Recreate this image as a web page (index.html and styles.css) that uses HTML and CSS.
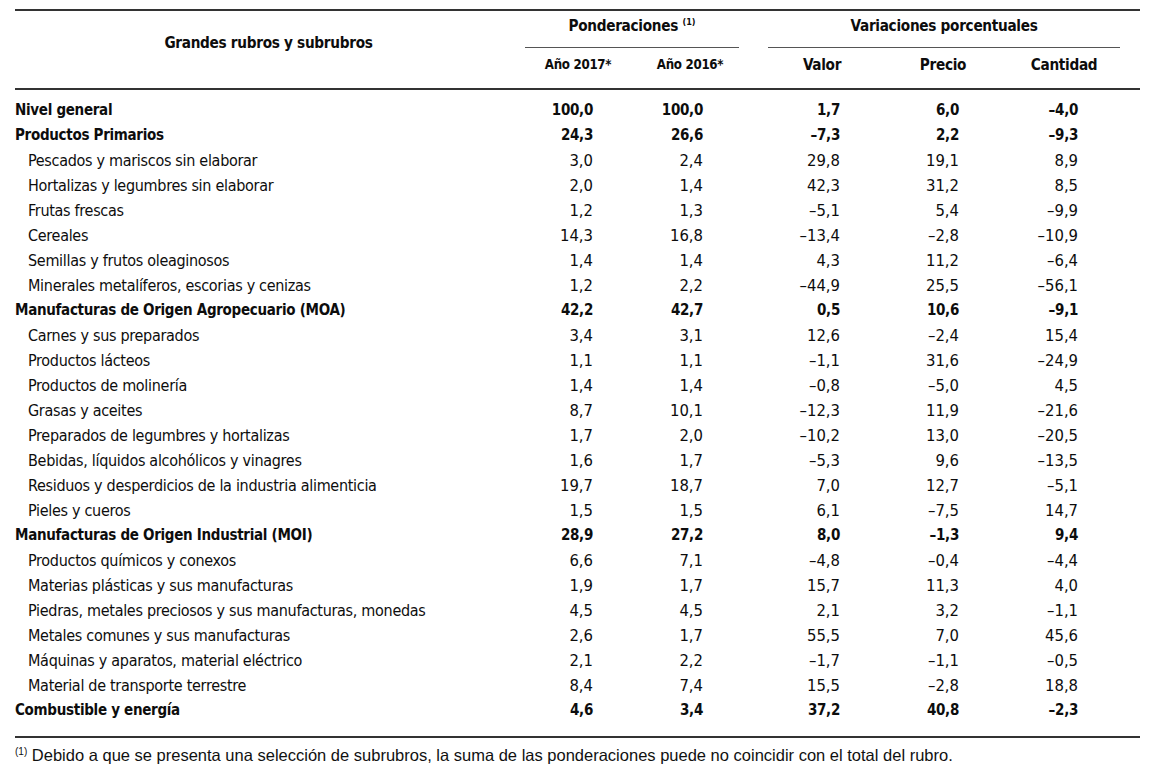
FILE: index.html
```html
<!DOCTYPE html>
<html lang="es">
<head>
<meta charset="utf-8">
<title>Ponderaciones y variaciones porcentuales</title>
<link rel="stylesheet" href="styles.css">
</head>
<body>
<div class="page">
<table class="tbl">
<colgroup>
<col class="c-label"><col class="c-a"><col class="c-b"><col class="c-v"><col class="c-p"><col class="c-q">
</colgroup>
<thead>
<tr class="h1">
<th rowspan="2" class="h-label">Grandes rubros y subrubros</th>
<th colspan="2" class="grp"><span class="grp-in grp-pond">Ponderaciones <sup>(1)</sup></span></th>
<th colspan="3" class="grp"><span class="grp-in grp-var">Variaciones porcentuales</span></th>
</tr>
<tr class="h2">
<th class="ha">Año 2017*</th><th class="hb">Año 2016*</th><th class="hv">Valor</th><th class="hp">Precio</th><th class="hq">Cantidad</th>
</tr>
</thead>
<tbody>
<tr class="main"><td>Nivel general</td><td>100,0</td><td>100,0</td><td>1,7</td><td>6,0</td><td>–4,0</td></tr>
<tr class="main"><td>Productos Primarios</td><td>24,3</td><td>26,6</td><td>–7,3</td><td>2,2</td><td>–9,3</td></tr>
<tr><td>Pescados y mariscos sin elaborar</td><td>3,0</td><td>2,4</td><td>29,8</td><td>19,1</td><td>8,9</td></tr>
<tr><td>Hortalizas y legumbres sin elaborar</td><td>2,0</td><td>1,4</td><td>42,3</td><td>31,2</td><td>8,5</td></tr>
<tr><td>Frutas frescas</td><td>1,2</td><td>1,3</td><td>–5,1</td><td>5,4</td><td>–9,9</td></tr>
<tr><td>Cereales</td><td>14,3</td><td>16,8</td><td>–13,4</td><td>–2,8</td><td>–10,9</td></tr>
<tr><td>Semillas y frutos oleaginosos</td><td>1,4</td><td>1,4</td><td>4,3</td><td>11,2</td><td>–6,4</td></tr>
<tr><td>Minerales metalíferos, escorias y cenizas</td><td>1,2</td><td>2,2</td><td>–44,9</td><td>25,5</td><td>–56,1</td></tr>
<tr class="main"><td>Manufacturas de Origen Agropecuario (MOA)</td><td>42,2</td><td>42,7</td><td>0,5</td><td>10,6</td><td>–9,1</td></tr>
<tr><td>Carnes y sus preparados</td><td>3,4</td><td>3,1</td><td>12,6</td><td>–2,4</td><td>15,4</td></tr>
<tr><td>Productos lácteos</td><td>1,1</td><td>1,1</td><td>–1,1</td><td>31,6</td><td>–24,9</td></tr>
<tr><td>Productos de molinería</td><td>1,4</td><td>1,4</td><td>–0,8</td><td>–5,0</td><td>4,5</td></tr>
<tr><td>Grasas y aceites</td><td>8,7</td><td>10,1</td><td>–12,3</td><td>11,9</td><td>–21,6</td></tr>
<tr><td>Preparados de legumbres y hortalizas</td><td>1,7</td><td>2,0</td><td>–10,2</td><td>13,0</td><td>–20,5</td></tr>
<tr><td>Bebidas, líquidos alcohólicos y vinagres</td><td>1,6</td><td>1,7</td><td>–5,3</td><td>9,6</td><td>–13,5</td></tr>
<tr><td>Residuos y desperdicios de la industria alimenticia</td><td>19,7</td><td>18,7</td><td>7,0</td><td>12,7</td><td>–5,1</td></tr>
<tr><td>Pieles y cueros</td><td>1,5</td><td>1,5</td><td>6,1</td><td>–7,5</td><td>14,7</td></tr>
<tr class="main"><td>Manufacturas de Origen Industrial (MOI)</td><td>28,9</td><td>27,2</td><td>8,0</td><td>–1,3</td><td>9,4</td></tr>
<tr><td>Productos químicos y conexos</td><td>6,6</td><td>7,1</td><td>–4,8</td><td>–0,4</td><td>–4,4</td></tr>
<tr><td>Materias plásticas y sus manufacturas</td><td>1,9</td><td>1,7</td><td>15,7</td><td>11,3</td><td>4,0</td></tr>
<tr><td>Piedras, metales preciosos y sus manufacturas, monedas</td><td>4,5</td><td>4,5</td><td>2,1</td><td>3,2</td><td>–1,1</td></tr>
<tr><td>Metales comunes y sus manufacturas</td><td>2,6</td><td>1,7</td><td>55,5</td><td>7,0</td><td>45,6</td></tr>
<tr><td>Máquinas y aparatos, material eléctrico</td><td>2,1</td><td>2,2</td><td>–1,7</td><td>–1,1</td><td>–0,5</td></tr>
<tr><td>Material de transporte terrestre</td><td>8,4</td><td>7,4</td><td>15,5</td><td>–2,8</td><td>18,8</td></tr>
<tr class="main"><td>Combustible y energía</td><td>4,6</td><td>3,4</td><td>37,2</td><td>40,8</td><td>–2,3</td></tr>
</tbody>
</table>
<p class="note"><sup>(1)</sup> Debido a que se presenta una selección de subrubros, la suma de las ponderaciones puede no coincidir con el total del rubro.</p>
</div>
</body>
</html>
```
FILE: styles.css
```css
html, body {
  margin: 0;
  padding: 0;
  background: #ffffff;
}
.page {
  padding: 9px 16px 0 15px;
  color: #0d0d0d;
  font-family: "DejaVu Sans Condensed", "Liberation Sans Narrow", "Arial Narrow", sans-serif;
}
.tbl {
  width: 1125px;
  border-collapse: collapse;
  table-layout: fixed;
  font-size: 16.5px;
}
.c-label { width: 507px; }
.c-a { width: 112px; }
.c-b { width: 128px; }
.c-v { width: 120px; }
.c-p { width: 122px; }
.c-q { width: 136px; }

.tbl thead {
  border-top: 2px solid #333333;
  border-bottom: 2px solid #333333;
}
.tbl th {
  font-weight: bold;
  font-size: 15.2px;
  letter-spacing: -0.3px;
  line-height: 20px;
  padding: 0;
  text-align: center;
  vertical-align: top;
}
.h-label {
  padding-top: 22px !important;
}
.h1 .grp {
  padding-top: 5px;
}
.grp-in {
  display: block;
  padding-bottom: 11px;
  border-bottom: 1px solid #555555;
}
.grp-in sup {
  font-size: 9px;
  letter-spacing: 0;
  line-height: 0;
  vertical-align: 6px;
}
.grp-pond {
  margin: 0 23px 0 3px;
}
.grp-var {
  margin: 0 20px 0 6px;
}
.h2 th {
  padding: 7px 0 13px;
}
.h2 .ha, .h2 .hb {
  font-size: 13.2px;
}
.h2 .hb, .h2 .hq {
  padding-right: 16px;
}

.tbl tbody {
  border-bottom: 2px solid #333333;
}
.tbl td {
  padding: 0;
  line-height: 25px;
  height: 25px;
  text-align: right;
  white-space: nowrap;
}
.tbl td:first-child {
  text-align: left;
  padding-left: 13px;
  font-size: 16px;
  letter-spacing: -0.3px;
}
.tbl tr.main td {
  font-weight: bold;
  font-size: 15px;
  letter-spacing: -0.3px;
}
.tbl tr.main td:first-child {
  padding-left: 0;
}
.tbl td:nth-child(2) { padding-right: 41px; }
.tbl td:nth-child(3) { padding-right: 59px; }
.tbl td:nth-child(4) { padding-right: 42px; }
.tbl td:nth-child(5) { padding-right: 45px; }
.tbl td:nth-child(6) { padding-right: 62px; }
.tbl tbody tr:first-child td {
  padding-top: 8px;
}
.tbl tbody tr:last-child td {
  padding-bottom: 13px;
}

.note {
  margin: 7px 0 0;
  font-family: "Liberation Sans", Arial, sans-serif;
  font-size: 16.5px;
  line-height: 20px;
  color: #111111;
}
.note sup {
  font-size: 10px;
  line-height: 0;
  vertical-align: 6px;
}
```
